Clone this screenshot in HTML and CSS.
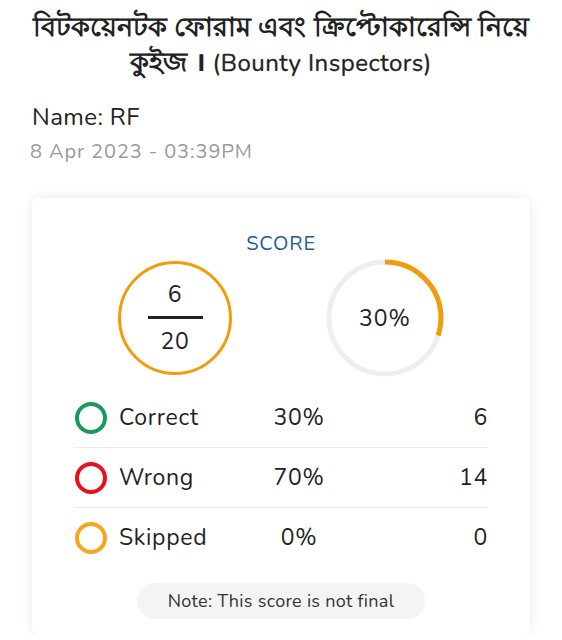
FILE: index.html
```html
<!DOCTYPE html>
<html lang="bn">
<head>
  <meta charset="UTF-8" />
  <title>Quiz Result</title>
  <link rel="stylesheet" href="styles.css">
</head>
<body>
  <h1 class="title">বিটকয়েনটক ফোরাম এবং ক্রিপ্টোকারেন্সি নিয়ে কুইজ । <span class="title-en">(Bounty Inspectors)</span></h1>

  <div class="meta">
    <div class="name">Name: RF</div>
    <div class="date">8 Apr 2023 - 03:39PM</div>
  </div>

  <div class="card">
    <div class="score-label">SCORE</div>

    <div class="circles">
      <div class="fraction">
        <span>6</span>
        <span class="bar"></span>
        <span>20</span>
      </div>

      <div class="ring">
        <svg width="118" height="118" viewBox="0 0 118 118">
          <circle cx="59" cy="59" r="56" fill="none" stroke="#eeeeee" stroke-width="5" />
          <circle cx="59" cy="59" r="56" fill="none" stroke="#f39c0b" stroke-width="5"
            stroke-dasharray="105.6 400" transform="rotate(-90 59 59)" />
        </svg>
        <span class="ring-text">30%</span>
      </div>
    </div>

    <div class="stats">
      <div class="row">
        <span class="label"><i class="dot green"></i>Correct</span>
        <span class="pct">30%</span>
        <span class="count">6</span>
      </div>
      <div class="row">
        <span class="label"><i class="dot red"></i>Wrong</span>
        <span class="pct">70%</span>
        <span class="count">14</span>
      </div>
      <div class="row">
        <span class="label"><i class="dot orange"></i>Skipped</span>
        <span class="pct">0%</span>
        <span class="count">0</span>
      </div>
    </div>

    <div class="note">Note: This score is not final</div>
  </div>
</body>
</html>
```

FILE: styles.css
```css
body {
  margin: 0;
  padding: 0;
  background: #fff;
  color: #222;
  font-family: "Nunito", "Lato", "Noto Sans", sans-serif;
  overflow: hidden;
}

.title {
  margin: 0;
  padding: 10px 24px 0;
  text-align: center;
  font-size: 27px;
  line-height: 35px;
  font-weight: 700;
  color: #222;
}

.title-en {
  font-size: 24px;
  font-weight: 400;
  letter-spacing: 0.5px;
  -webkit-text-stroke: 0.3px #222;
}

.meta {
  padding: 19px 0 0 30px;
}

.name {
  font-size: 24px;
  line-height: 34px;
  letter-spacing: 0.4px;
  color: #222;
  padding-left: 2px;
}

.date {
  font-size: 20px;
  line-height: 36px;
  letter-spacing: 0.9px;
  color: #999;
}

.card {
  margin: 28px 32px 0;
  padding: 32px 42px 15px;
  background: #fff;
  border-radius: 7px;
  box-shadow: 0 0 12px rgba(0, 0, 0, 0.09);
}

.score-label {
  text-align: center;
  font-size: 20px;
  line-height: 28px;
  letter-spacing: 0.8px;
  color: #1f5c94;
}

.circles {
  display: flex;
  justify-content: center;
  align-items: center;
  gap: 94px;
  margin-top: 1px;
}

.fraction {
  width: 108px;
  height: 108px;
  border: 3px solid #f39c0b;
  border-radius: 50%;
  display: flex;
  flex-direction: column;
  align-items: center;
  justify-content: center;
  font-size: 23px;
  line-height: 26px;
  letter-spacing: 0.7px;
}

.fraction .bar {
  width: 55px;
  height: 3px;
  background: #222;
  margin: 8px 0 10px;
}

.ring {
  position: relative;
  width: 118px;
  height: 118px;
}

.ring svg {
  display: block;
}

.ring-text {
  position: absolute;
  inset: 0;
  display: flex;
  align-items: center;
  justify-content: center;
  font-size: 23px;
  letter-spacing: 1px;
}

.stats {
  margin-top: 11px;
}

.row {
  display: grid;
  grid-template-columns: 180px 90px 1fr;
  align-items: center;
  height: 59px;
  font-size: 23px;
  letter-spacing: 0.7px;
  border-bottom: 1px solid #ececec;
}

.row:last-child {
  border-bottom: none;
}

.label {
  display: flex;
  align-items: center;
}

.pct {
  text-align: center;
}

.count {
  text-align: right;
}

.dot {
  width: 24px;
  height: 24px;
  border-radius: 50%;
  border: 4px solid;
  margin: 0 12px 0 1px;
}

.dot.green { border-color: #1a9a58; }
.dot.red { border-color: #e8101a; }
.dot.orange { border-color: #f6a51c; }

.note {
  margin: 16px auto 0;
  width: 288px;
  height: 36px;
  line-height: 36px;
  border-radius: 18px;
  background: #f4f4f4;
  text-align: center;
  font-size: 18px;
  letter-spacing: 0.3px;
  color: #333;
}
```
